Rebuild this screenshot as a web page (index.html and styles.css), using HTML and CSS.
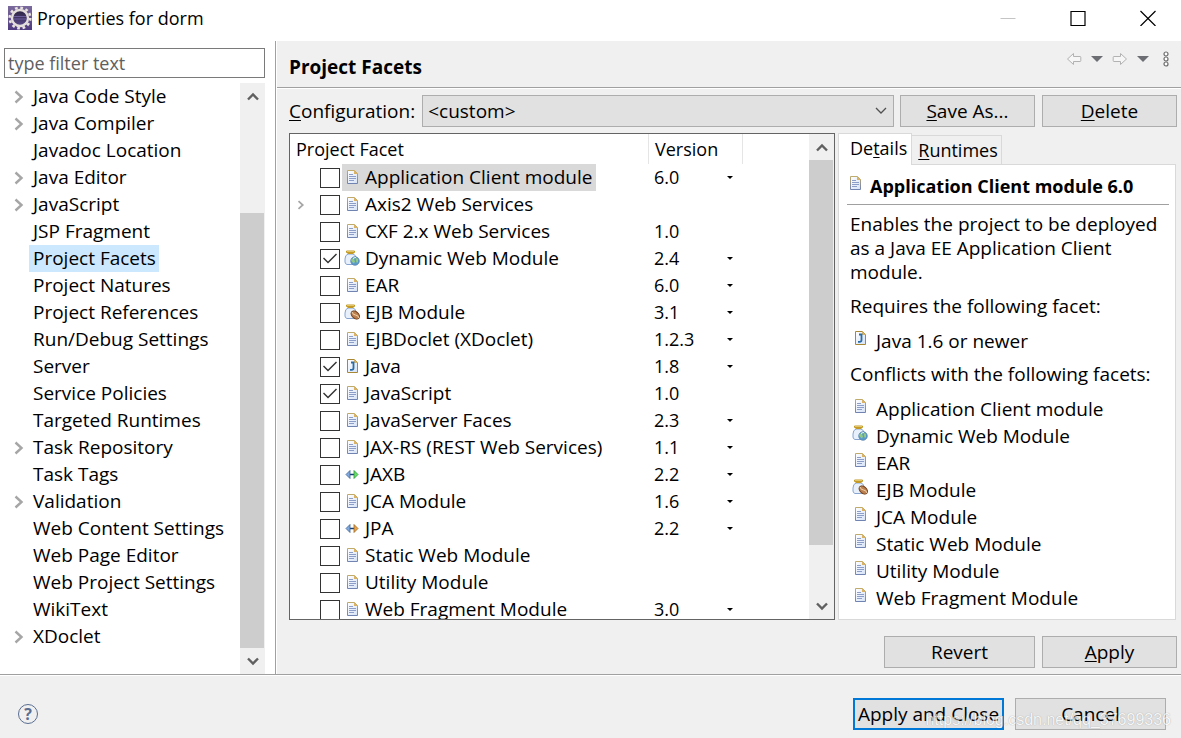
FILE: index.html
```html
<!DOCTYPE html>
<html lang="en">
<head>
	<meta charset="UTF-8">
	<title>Properties for dorm</title>
	<link rel="stylesheet" href="styles.css">
</head>
<body>
	<svg class="defs" aria-hidden="true">
		<defs>
			<linearGradient id="paper" x1="0" y1="0" x2="1" y2="1"><stop offset="0" stop-color="#fff"/><stop offset="1" stop-color="#d5e2f6"/></linearGradient>
			<linearGradient id="edge" x1="0" y1="0" x2="0" y2="1"><stop offset="0" stop-color="#bfab6c"/><stop offset="1" stop-color="#7183b0"/></linearGradient>
			<linearGradient id="sky" x1="0" y1="0" x2="0" y2="1"><stop offset="0" stop-color="#7b6a9c"/><stop offset="1" stop-color="#4f3b80"/></linearGradient>
			<linearGradient id="lens" x1="0" y1="0" x2="0" y2="1"><stop offset="0" stop-color="#2b2340"/><stop offset="1" stop-color="#5b4a8c"/></linearGradient>
		</defs>
		<symbol id="doc" viewBox="0 0 16 16">
			<path d="M3.500 1.500h7l3 3v10h-10z" fill="url(#paper)" stroke="url(#edge)"/>
			<path d="M10 1v4h4z" fill="#d9b265"/>
			<path d="M5 5.500h4M5 7.500h7M5 9.500h7M5 11.500h5" stroke="#8c9dc8"/>
		</symbol>
		<symbol id="jdoc" viewBox="0 0 16 16">
			<path d="M3.500 1.500h7l3 3v10h-10z" fill="url(#paper)" stroke="#a98835"/>
			<path d="M10 1v4h4z" fill="#d9b265"/>
			<path d="M7 4.500h2.500v5.500q0 1.800-1.800 1.800H6" fill="none" stroke="#286ca8" stroke-width="1.800"/>
		</symbol>
		<symbol id="web" viewBox="0 0 16 16">
			<path d="M4 4Q1 5 1 9v3q0 2 2 2.500h7q2-.5 2-3V8q0-3-3-4z" fill="#e8f0fb" stroke="#86a4cf"/>
			<path d="M2.500 1h8v1.500h-8zM3.500 3.500h6" fill="#fff1b0" stroke="#c39a28"/>
			<circle cx="11" cy="11" r="4.300" fill="#5b9cc9" stroke="#5480ad" stroke-width=".7"/>
			<path d="M8 9q2-2 3-1.500l-1 2 1 2-1 2q-2-1-3-3.500zM12 8l2 1v3l-1 1-1-2z" fill="#92ca84"/>
			<path d="M9 8.500q2-1.500 3-.8" fill="none" stroke="#e9f7fc"/>
		</symbol>
		<symbol id="ejb" viewBox="0 0 16 16">
			<path d="M4 4Q1 5 1 9v3q0 2 2 2.500h7q2-.5 2-3V8q0-3-3-4z" fill="#e8f0fb" stroke="#86a4cf"/>
			<path d="M2.500 1h8v1.500h-8zM3.500 3.500h6" fill="#fff1b0" stroke="#c39a28"/>
			<ellipse cx="11.300" cy="11" rx="4.800" ry="3.300" transform="rotate(42 11.300 11)" fill="#bd8050" stroke="#714220"/>
			<path d="M8 8q1 3 3.500 3t3.500 3" fill="none" stroke="#f1d6ad"/>
		</symbol>
		<symbol id="jaxb" viewBox="0 0 16 16">
			<path d="M5 8.500h5" stroke="#173e73" stroke-width="1.500"/>
			<path d="M2 8.500l4-4v8z" fill="#7fa9df" stroke="#3f6596" stroke-width=".8"/>
			<path d="M14 8.500l-4-4v8z" fill="#68de62" stroke="#26963e" stroke-width=".8"/>
		</symbol>
		<symbol id="jpa" viewBox="0 0 16 16">
			<path d="M5 8.500h5" stroke="#173e73" stroke-width="1.500"/>
			<path d="M2 8.500l4-4v8z" fill="#7fa9df" stroke="#3f6596" stroke-width=".8"/>
			<path d="M14 8.500l-4-4v8z" fill="#e8a349" stroke="#9b6421" stroke-width=".8"/>
		</symbol>
		<symbol id="up" viewBox="0 0 12 12"><path d="M1 9.500l5-5 5 5" fill="none" stroke="#606060" stroke-width="2.400"/></symbol>
		<symbol id="down" viewBox="0 0 12 12"><path d="M1 3.500l5 5 5-5" fill="none" stroke="#606060" stroke-width="2.400"/></symbol>
		<symbol id="chev" viewBox="0 0 10 14"><path d="M1.500 1.500L7.500 7l-6 5.500" fill="none" stroke="#a6a6a6" stroke-width="2.400"/></symbol>
		<symbol id="tri" viewBox="0 0 12 6"><path d="M0 0h12L6 6z" fill="#6d6e74"/></symbol>
		<symbol id="arrow" viewBox="0 0 16 14"><path d="M1.500 7l6-5.500v3H14q.8 0 .8.800v3.400q0 .8-.8.800H7.500v3z" fill="#f6f6f6" stroke="#b2b2b2"/></symbol>
	</svg>

	<div class="window">
		<header class="titlebar">
			<svg class="app-icon" viewBox="0 0 24 24">
				<rect width="24" height="24" fill="url(#sky)"/>
				<circle cx="12" cy="12" r="10.300" fill="none" stroke="#e9e4df" stroke-width="2.600" stroke-dasharray="2.700 2.693"/>
				<circle cx="12" cy="12" r="8" fill="url(#lens)" stroke="#e5dfdc" stroke-width="2.400"/>
				<path d="M6 10.500h12M5.500 13h13" stroke="#6b5c9c"/>
			</svg>
			<h1>Properties for dorm</h1>
			<div class="win-buttons">
				<button aria-label="Minimize"><svg viewBox="0 0 16 16"><path d="M.5 8.500h15" stroke="#c4c4c4"/></svg></button>
				<button aria-label="Maximize"><svg viewBox="0 0 16 16"><path d="M1 1.500h14v14H1z" fill="none" stroke="#000" stroke-width="1.200"/></svg></button>
				<button aria-label="Close"><svg viewBox="0 0 16 16"><path d="M.5 1l15 15M15.500 1l-15 15" stroke="#000" stroke-width="1.200"/></svg></button>
			</div>
		</header>

		<div class="body">
			<nav class="side">
				<input class="filter" type="text" placeholder="type filter text" aria-label="type filter text">
				<div class="tree-wrap">
					<ul class="tree">
						<li><svg><use href="#chev"/></svg><a href="#">Java Code Style</a></li>
						<li><svg><use href="#chev"/></svg><a href="#">Java Compiler</a></li>
						<li><a href="#">Javadoc Location</a></li>
						<li><svg><use href="#chev"/></svg><a href="#">Java Editor</a></li>
						<li><svg><use href="#chev"/></svg><a href="#">JavaScript</a></li>
						<li><a href="#">JSP Fragment</a></li>
						<li><a href="#" class="on">Project Facets</a></li>
						<li><a href="#">Project Natures</a></li>
						<li><a href="#">Project References</a></li>
						<li><a href="#">Run/Debug Settings</a></li>
						<li><a href="#">Server</a></li>
						<li><a href="#">Service Policies</a></li>
						<li><a href="#">Targeted Runtimes</a></li>
						<li><svg><use href="#chev"/></svg><a href="#">Task Repository</a></li>
						<li><a href="#">Task Tags</a></li>
						<li><svg><use href="#chev"/></svg><a href="#">Validation</a></li>
						<li><a href="#">Web Content Settings</a></li>
						<li><a href="#">Web Page Editor</a></li>
						<li><a href="#">Web Project Settings</a></li>
						<li><a href="#">WikiText</a></li>
						<li><svg><use href="#chev"/></svg><a href="#">XDoclet</a></li>
					</ul>
					<div class="scroll scroll-side">
						<button aria-label="Scroll up"><svg><use href="#up"/></svg></button>
						<div class="track"><div class="thumb"></div></div>
						<button aria-label="Scroll down"><svg><use href="#down"/></svg></button>
					</div>
				</div>
			</nav>

			<main class="main">
				<div class="main-head">
					<h2>Project Facets</h2>
					<div class="nav-buttons">
						<button aria-label="Back"><svg class="arr"><use href="#arrow"/></svg></button>
						<button aria-label="Back history"><svg class="tri"><use href="#tri"/></svg></button>
						<button aria-label="Forward"><svg class="arr flip"><use href="#arrow"/></svg></button>
						<button aria-label="Forward history"><svg class="tri"><use href="#tri"/></svg></button>
						<button aria-label="Menu"><svg class="dots" viewBox="0 0 6 16"><g fill="#fff" stroke="#6d6d6d" stroke-width="1.200"><circle cx="3" cy="3" r="2"/><circle cx="3" cy="8" r="2"/><circle cx="3" cy="13" r="2"/></g></svg></button>
					</div>
				</div>

				<div class="config">
					<label for="conf"><u>C</u>onfiguration:</label>
					<div class="select">
						<select id="conf"><option>&lt;custom&gt;</option></select>
						<svg viewBox="0 0 12 8"><path d="M1 1l5 5 5-5" fill="none" stroke="#505050" stroke-width="1.300"/></svg>
					</div>
					<button class="btn"><u>S</u>ave As...</button>
					<button class="btn"><u>D</u>elete</button>
				</div>

				<div class="panes">
					<div class="facets">
						<div class="table-wrap">
							<table>
								<thead>
									<tr><th class="c1">Project Facet</th><th class="c2">Version</th><th></th></tr>
								</thead>
								<tbody>
									<tr><td><div class="facet"><input type="checkbox" id="f1"><label for="f1" class="on"><svg><use href="#doc"/></svg>Application Client module</label></div></td><td><div class="ver">6.0<button aria-label="Change version"></button></div></td><td></td></tr>
									<tr><td><div class="facet"><svg class="exp"><use href="#chev"/></svg><input type="checkbox" id="f2"><label for="f2"><svg><use href="#doc"/></svg>Axis2 Web Services</label></div></td><td></td><td></td></tr>
									<tr><td><div class="facet"><input type="checkbox" id="f3"><label for="f3"><svg><use href="#doc"/></svg>CXF 2.x Web Services</label></div></td><td><div class="ver">1.0</div></td><td></td></tr>
									<tr><td><div class="facet"><input type="checkbox" id="f4" checked><label for="f4"><svg><use href="#web"/></svg>Dynamic Web Module</label></div></td><td><div class="ver">2.4<button aria-label="Change version"></button></div></td><td></td></tr>
									<tr><td><div class="facet"><input type="checkbox" id="f5"><label for="f5"><svg><use href="#doc"/></svg>EAR</label></div></td><td><div class="ver">6.0<button aria-label="Change version"></button></div></td><td></td></tr>
									<tr><td><div class="facet"><input type="checkbox" id="f6"><label for="f6"><svg><use href="#ejb"/></svg>EJB Module</label></div></td><td><div class="ver">3.1<button aria-label="Change version"></button></div></td><td></td></tr>
									<tr><td><div class="facet"><input type="checkbox" id="f7"><label for="f7"><svg><use href="#doc"/></svg>EJBDoclet (XDoclet)</label></div></td><td><div class="ver">1.2.3<button aria-label="Change version"></button></div></td><td></td></tr>
									<tr><td><div class="facet"><input type="checkbox" id="f8" checked><label for="f8"><svg><use href="#jdoc"/></svg>Java</label></div></td><td><div class="ver">1.8<button aria-label="Change version"></button></div></td><td></td></tr>
									<tr><td><div class="facet"><input type="checkbox" id="f9" checked><label for="f9"><svg><use href="#doc"/></svg>JavaScript</label></div></td><td><div class="ver">1.0</div></td><td></td></tr>
									<tr><td><div class="facet"><input type="checkbox" id="f10"><label for="f10"><svg><use href="#doc"/></svg>JavaServer Faces</label></div></td><td><div class="ver">2.3<button aria-label="Change version"></button></div></td><td></td></tr>
									<tr><td><div class="facet"><input type="checkbox" id="f11"><label for="f11"><svg><use href="#doc"/></svg>JAX-RS (REST Web Services)</label></div></td><td><div class="ver">1.1<button aria-label="Change version"></button></div></td><td></td></tr>
									<tr><td><div class="facet"><input type="checkbox" id="f12"><label for="f12"><svg><use href="#jaxb"/></svg>JAXB</label></div></td><td><div class="ver">2.2<button aria-label="Change version"></button></div></td><td></td></tr>
									<tr><td><div class="facet"><input type="checkbox" id="f13"><label for="f13"><svg><use href="#doc"/></svg>JCA Module</label></div></td><td><div class="ver">1.6<button aria-label="Change version"></button></div></td><td></td></tr>
									<tr><td><div class="facet"><input type="checkbox" id="f14"><label for="f14"><svg><use href="#jpa"/></svg>JPA</label></div></td><td><div class="ver">2.2<button aria-label="Change version"></button></div></td><td></td></tr>
									<tr><td><div class="facet"><input type="checkbox" id="f15"><label for="f15"><svg><use href="#doc"/></svg>Static Web Module</label></div></td><td></td><td></td></tr>
									<tr><td><div class="facet"><input type="checkbox" id="f16"><label for="f16"><svg><use href="#doc"/></svg>Utility Module</label></div></td><td></td><td></td></tr>
									<tr><td><div class="facet"><input type="checkbox" id="f17"><label for="f17"><svg><use href="#doc"/></svg>Web Fragment Module</label></div></td><td><div class="ver">3.0<button aria-label="Change version"></button></div></td><td></td></tr>
								</tbody>
							</table>
						</div>
						<div class="scroll scroll-facets">
							<button aria-label="Scroll up"><svg><use href="#up"/></svg></button>
							<div class="track"><div class="thumb"></div></div>
							<button aria-label="Scroll down"><svg><use href="#down"/></svg></button>
						</div>
					</div>

					<div class="details">
						<div class="tabs">
							<button class="tab on">De<u>t</u>ails</button>
							<button class="tab"><u>R</u>untimes</button>
						</div>
						<div class="panel">
							<h3><svg><use href="#doc"/></svg>Application Client module 6.0</h3>
							<p>Enables the project to be deployed as a Java EE Application Client module.</p>
							<p>Requires the following facet:</p>
							<ul>
								<li><svg><use href="#jdoc"/></svg>Java 1.6 or newer</li>
							</ul>
							<p>Conflicts with the following facets:</p>
							<ul>
								<li><svg><use href="#doc"/></svg>Application Client module</li>
								<li><svg><use href="#web"/></svg>Dynamic Web Module</li>
								<li><svg><use href="#doc"/></svg>EAR</li>
								<li><svg><use href="#ejb"/></svg>EJB Module</li>
								<li><svg><use href="#doc"/></svg>JCA Module</li>
								<li><svg><use href="#doc"/></svg>Static Web Module</li>
								<li><svg><use href="#doc"/></svg>Utility Module</li>
								<li><svg><use href="#doc"/></svg>Web Fragment Module</li>
							</ul>
						</div>
					</div>
				</div>

				<div class="actions">
					<button class="btn wide">Revert</button>
					<button class="btn"><u>A</u>pply</button>
				</div>
			</main>
		</div>

		<footer class="footer">
			<button class="help" aria-label="Help">?</button>
			<button class="btn wide primary">Apply and Close</button>
			<button class="btn wide">Cancel</button>
			<span class="mark">https://blog.csdn.net/qq_37699336</span>
		</footer>
	</div>
</body>
</html>
```
FILE: styles.css
```css
* {margin: 0;padding: 0;box-sizing: border-box;}
body {background: #fff;color: #000;font: 19px/24px "Open Sans", "Noto Sans", sans-serif;}
button, input, select {font: inherit;color: inherit;}
button {border: none;background: none;}
ul {list-style: none;}
a {color: inherit;text-decoration: none;}
u {text-decoration: underline 1px;text-underline-offset: 2px;text-decoration-skip-ink: none;}
svg {display: block;flex: none;}
.defs {position: absolute;width: 0;height: 0;}

.window {display: flex;flex-direction: column;height: 100vh;overflow: hidden;}

/* title bar */
.titlebar {display: flex;align-items: center;height: 41px;padding: 0 25px 5px 8px;flex: none;}
.titlebar h1 {font-size: 18px;font-weight: normal;margin-left: 5px;flex: 1;}
.app-icon {width: 24px;height: 24px;}
.win-buttons {display: flex;gap: 54px;}
.win-buttons svg {width: 16px;height: 16px;}

.body {display: flex;flex: 1;min-height: 0;border-bottom: 1px solid #a0a0a0;}

/* page tree */
.side {display: flex;flex-direction: column;width: 276px;flex: none;padding: 7px 10px 0 0;border-right: 1px solid #a0a0a0;}
.filter {height: 30px;margin-left: 4px;padding: 0 3px;border: 1px solid #7a7a7a;background: #fff;font-size: 18px;flex: none;}
.filter::placeholder {color: #606060;opacity: 1;}
.tree-wrap {display: flex;flex: 1;min-height: 0;margin-top: 5px;}
.tree {flex: 1;}
.tree li {display: flex;align-items: center;justify-content: flex-end;height: 27px;}
.tree svg {width: 10px;height: 14px;}
.tree a {width: 211px;margin-left: 5px;padding-left: 4px;line-height: 27px;white-space: nowrap;}
.tree a.on {width: auto;margin-right: auto;margin-left: 29px;padding-right: 3px;background: #cce8ff;}

/* scroll bars */
.scroll {display: flex;flex-direction: column;width: 25px;flex: none;background: #f0f0f0;}
.scroll button {display: flex;align-items: center;justify-content: center;height: 26px;flex: none;}
.scroll svg {width: 12px;height: 12px;}
.track {display: flex;flex-direction: column;flex: 1;}
.thumb {width: 24px;background: #cdcdcd;}
.scroll-side .track {justify-content: flex-end;}
.scroll-side .thumb {height: calc(100% * 21 / 26);}
.scroll-facets .thumb {height: 89%;}

/* page */
.main {display: flex;flex-direction: column;flex: 1;min-width: 0;background: #f0f0f0;border-left: 1px solid #fff;}
.main-head {display: flex;justify-content: space-between;height: 47px;padding: 0 12px;border-bottom: 1px solid #a0a0a0;box-shadow: 0 1px #fff;flex: none;}
.main-head h2 {font-size: 19px;font-weight: bold;line-height: 52px;}
.nav-buttons {display: flex;align-items: center;gap: 9px;height: 36px;}
.arr {width: 16px;height: 14px;}
.flip {transform: scaleX(-1);}
.tri {width: 12px;height: 6px;}
.dots {width: 6px;height: 16px;margin-left: 5px;}

.config {display: flex;align-items: center;padding: 7px 4px 6px 12px;}
.select {position: relative;flex: 1;margin: 0 6px 0 7px;}
.select select {width: 100%;height: 32px;padding: 0 5px;appearance: none;border: 1px solid #adadad;border-radius: 0;background: #e1e1e1;}
.select svg {position: absolute;top: 12px;right: 7px;width: 12px;height: 8px;pointer-events: none;}
.btn {width: 135px;height: 32px;border: 1px solid #adadad;background: #e1e1e1;line-height: 24px;white-space: nowrap;flex: none;}
.btn + .btn {margin-left: 7px;}
.btn.wide {width: 151px;}

.panes {display: flex;flex: 1;min-height: 0;gap: 3px;padding: 0 5px 0 12px;}

/* facet table */
.facets {display: flex;flex: 1;min-width: 0;background: #fff;border: 1px solid #646464;}
.table-wrap {flex: 1;overflow: hidden;}
table {width: 100%;table-layout: fixed;border-collapse: separate;border-spacing: 0;}
th {height: 30px;font-size: 18px;font-weight: normal;text-align: left;padding-left: 6px;}
.c1 {width: 359px;}
.c2 {width: 94px;}
.c1, .c2 {border-right: 1px solid #e5e5e5;}
td {height: 27px;}
.facet {display: flex;align-items: center;height: 27px;padding-left: 30px;position: relative;}
.exp {position: absolute;left: 7px;width: 8px;height: 10px;}
.facet input {width: 20px;height: 20px;margin-right: 2px;appearance: none;border: 1px solid #333;background: #fff;}
.facet input:checked::before {content: "";display: block;width: 18px;height: 18px;background: #333;clip-path: polygon(2px 9px, 3px 8px, 7px 12px, 15px 4px, 16px 5px, 7px 14px);}
.facet label {display: flex;align-items: center;height: 27px;padding: 0 4px 2px 2px;gap: 5px;white-space: nowrap;}
.facet label.on {background: #d9d9d9;}
label svg, .panel svg {width: 16px;height: 16px;}
.ver {display: flex;align-items: center;justify-content: space-between;height: 27px;padding: 0 10px 2px 5px;font-size: 18px;}
.ver button {margin-top: 2px;border: 3px solid transparent;border-top-color: #000;border-bottom: 0;}

/* details */
.details {display: flex;flex-direction: column;width: 338px;flex: none;}
.tabs {display: flex;align-items: flex-end;height: 32px;flex: none;font-size: 18px;}
.tab {height: 30px;padding: 0 3px 2px 6px;border: 1px solid #d9d9d9;border-left: 0;border-bottom: 0;white-space: nowrap;}
.tab.on {position: relative;height: 32px;padding: 0 4px 3px 11px;background: #fff;border-left: 1px solid #d9d9d9;}
.panel {flex: 1;margin-top: -1px;padding: 8px 6px 0 8px;border: 1px solid #d9d9d9;background: #fff;}
.panel h3 {display: flex;gap: 7px;font-size: 18px;font-weight: bold;line-height: 27px;height: 32px;border-bottom: 1px solid #a0a0a0;white-space: nowrap;}
.panel p {padding: 0 3px;margin: 7px 0 10px;}
.panel li {display: flex;gap: 8px;padding-left: 5px;line-height: 27px;}
.panel svg {margin-top: 2px;}

.actions {display: flex;justify-content: flex-end;padding: 16px 4px 6px;}

/* bottom bar */
.footer {position: relative;display: flex;align-items: center;height: 63px;padding: 14px 15px 0 18px;background: #f0f0f0;border-top: 1px solid #fff;flex: none;}
.footer .btn + .btn {margin-left: 11px;}
.footer .primary {border: 2px solid #0078d7;}
.help {width: 20px;height: 20px;margin-right: auto;border: 1px solid #5a6e92;border-radius: 50%;color: #5a6e92;font-size: 16px;font-weight: bold;line-height: 18px;}
.mark {position: absolute;right: 10px;bottom: 8px;color: #fff;opacity: .7;font: 16px/20px "Liberation Sans", sans-serif;text-shadow: 0 0 1px #777;pointer-events: none;}
```
